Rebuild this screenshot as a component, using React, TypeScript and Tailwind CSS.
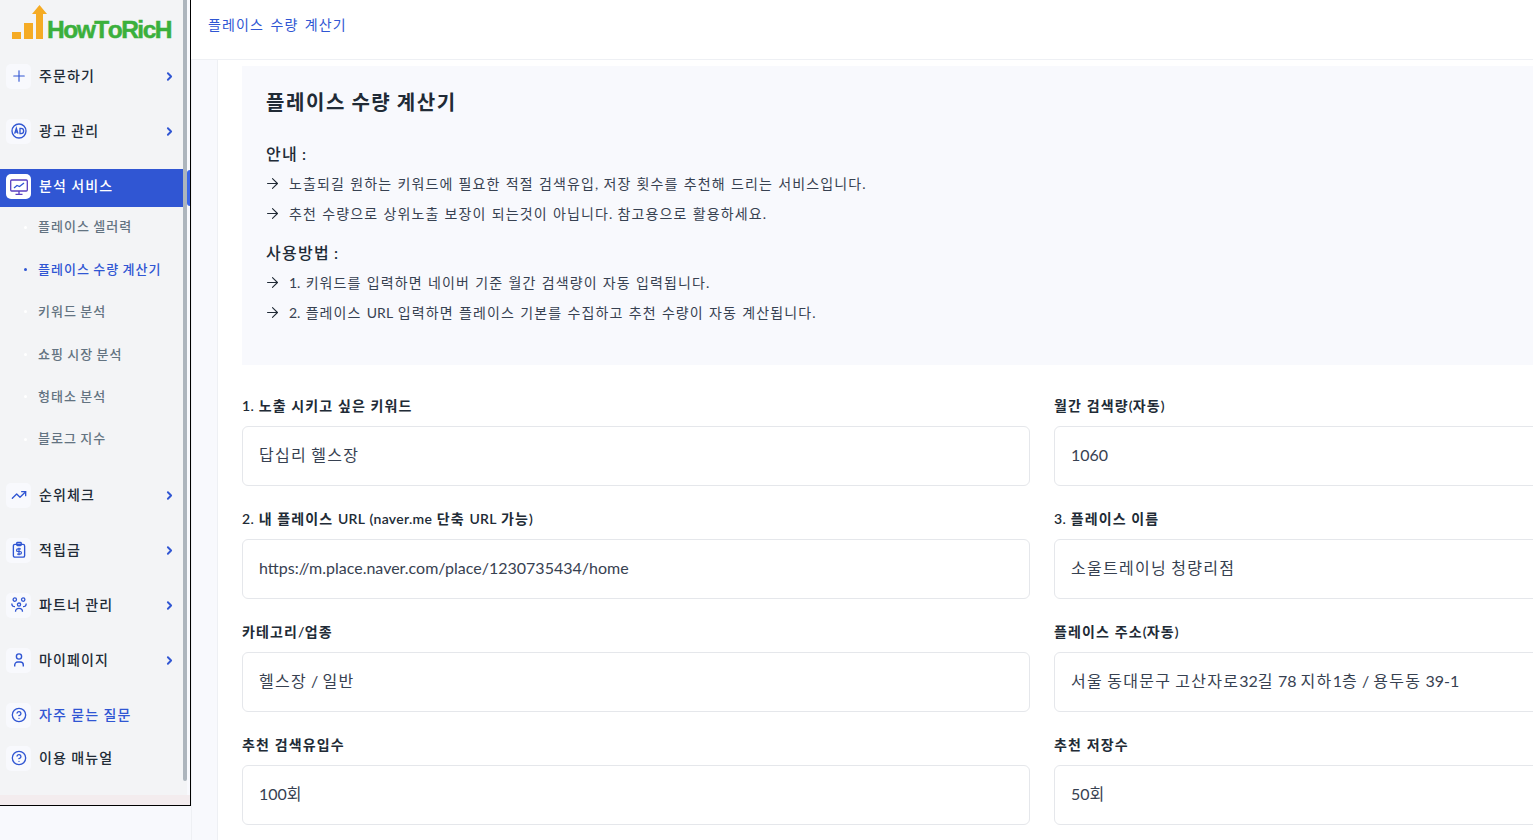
import type { ReactNode } from "react";
import { ArrowRight, ChevronRight, Plus, TrendingUp, CircleHelp } from "lucide-react";

// hangul in the reference sits on a full-em advance, so only those runs get spaced out
function Ko({ t }: { t: string }) {
  return (
    <>
      {t.split(/([가-힣]+)/).map((part, i) =>
        i % 2 === 1 ? (
          <span key={i} className="tracking-[0.08em]">
            {part}
          </span>
        ) : (
          part
        ),
      )}
    </>
  );
}

function AdIcon() {
  return (
    <svg viewBox="0 0 24 24" className="h-4 w-4" fill="none" stroke="currentColor" strokeWidth="2">
      <circle cx="12" cy="12" r="10.500" />
      <path d="M5.500 16 8 8l2.500 8M6.300 13.500h3.400M13.500 8v8h1.500a4 4 0 0 0 0-8z" strokeWidth="2" />
    </svg>
  );
}

function MonitorIcon() {
  return (
    <svg viewBox="0 0 18 18" className="h-[18px] w-[18px]" fill="none" stroke="#3056d3" strokeWidth="1.300">
      <rect x="0.700" y="2" width="16.600" height="11" rx="1" stroke="#5a3fc0" />
      <path d="m4 10 3-2.500 2.500 1L14 5" />
      <path d="M9 13v3M5.500 16.300h7" stroke="#5a3fc0" />
    </svg>
  );
}

function ClipIcon() {
  return (
    <svg viewBox="0 0 24 24" className="h-[18px] w-[18px]" fill="none" stroke="currentColor" strokeWidth="1.800">
      <rect x="4.500" y="4.500" width="15" height="17" rx="2" />
      <rect x="9" y="2" width="6" height="4" rx="1" />
      <path d="M14.500 10.500h-4a1.300 1.300 0 0 0 0 3.500h3a1.300 1.300 0 0 1 0 3.500h-4M12 9v10" strokeWidth="1.600" />
    </svg>
  );
}

function TeamIcon() {
  return (
    <svg viewBox="0 0 16 16" className="h-4 w-4" fill="none" stroke="currentColor" strokeWidth="1.300">
      <circle cx="3.800" cy="2.600" r="1.700" />
      <circle cx="12.200" cy="2.600" r="1.700" />
      <circle cx="8" cy="7.600" r="1.600" />
      <path d="M0.800 6.500c0 2 1.300 3.200 3.200 3.200M15.200 6.500c0 2-1.300 3.200-3.200 3.200M4.500 14.800c0-2.200 1.400-3.500 3.500-3.500s3.500 1.300 3.500 3.500" />
    </svg>
  );
}

function PersonIcon() {
  return (
    <svg viewBox="0 0 16 16" className="h-4 w-4" fill="none" stroke="currentColor" strokeWidth="1.400">
      <circle cx="8" cy="4.500" r="2.600" />
      <path d="M3.700 14.500v-1.500a3 3 0 0 1 3-3h2.600a3 3 0 0 1 3 3v1.500" />
    </svg>
  );
}

function Logo() {
  return (
    <div className="flex h-[39px] items-end pl-3">
      <svg viewBox="0 0 35 34" className="h-[34px] w-[35px] shrink-0" fill="#f5ab24">
        <rect x="0" y="27" width="9" height="7" />
        <rect x="12" y="18" width="9" height="16" />
        <path d="M24 34V9h-4l7.500-9L35 9h-4v25z" />
      </svg>
      <span className="font-['Liberation_Sans',sans-serif] text-[24.500px] leading-[18px] font-bold tracking-[-1.500px] text-[#3bb03c] [font-kerning:none] [-webkit-text-stroke:0.5px_#3bb03c]">
        HowToRicH
      </span>
    </div>
  );
}

function NavItem({ icon, label, chevron = true, active = false, blue = false, className = "" }: { icon: ReactNode; label: string; chevron?: boolean; active?: boolean; blue?: boolean; className?: string }) {
  return (
    <div className={`flex h-[38px] items-center pl-[6px] pr-[7px] ${active ? "bg-[#3056d3] pb-[3px]" : ""} ${className}`}>
      <span className={`flex h-[25px] w-[25px] items-center justify-center rounded-[5px] ${active ? "bg-white" : "bg-[#f8f9fd]"} text-[#3056d3]`}>{icon}</span>
      <span className={`ml-[8px] flex-1 pb-[2px] text-[14px] font-medium [word-spacing:0.05em] ${active ? "text-white" : blue ? "text-[#3056d3]" : "text-[#212b36]"}`}>
        <Ko t={label} />
      </span>
      {chevron && !active && <ChevronRight className="mt-px h-[13px] w-[13px] text-[#3056d3]" strokeWidth={3.500} />}
    </div>
  );
}

const subItems = ["플레이스 셀러력", "플레이스 수량 계산기", "키워드 분석", "쇼핑 시장 분석", "형태소 분석", "블로그 지수"];

function Sidebar() {
  return (
    <aside className="relative h-[806px] w-[191px] shrink-0 overflow-hidden border-r border-b border-black bg-[#f3f4f6]">
      <div className="absolute top-0 right-0 h-full w-[3px] bg-[#f8f9fd]" />
      <div className="absolute top-[170px] right-0 h-[36px] w-[3px] rounded-l-[3px] bg-[#3b66e8]" />
      <div className="absolute top-0 right-[3px] h-[781px] w-[4px] rounded-b-[2px] bg-[#adb5bd]" />
      <div className="w-[183px]">
        <div className="h-[57px]">
          <Logo />
        </div>
        <NavItem icon={<Plus className="h-[18px] w-[18px]" strokeWidth={1.500} />} label="주문하기" />
        <NavItem icon={<AdIcon />} label="광고 관리" className="mt-[17px]" />
        <NavItem icon={<MonitorIcon />} label="분석 서비스" active className="mt-[19px]" />
        <ul>
          {subItems.map((s, i) => (
            <li key={s} className={`flex h-[42.4px] items-center pb-[2px] pl-[24px] text-[13px] font-medium ${i === 1 ? "text-[#3056d3]" : "text-[#637381]"}`}>
              <span className={`h-[3px] w-[3px] rounded-full ${i === 1 ? "bg-[#3056d3]" : "bg-white"}`} />
              <span className="ml-[11px]">
                <Ko t={s} />
              </span>
            </li>
          ))}
        </ul>
        <NavItem icon={<TrendingUp className="h-4 w-4" />} label="순위체크" className="mt-[15px]" />
        <NavItem icon={<ClipIcon />} label="적립금" className="mt-[17px]" />
        <NavItem icon={<TeamIcon />} label="파트너 관리" className="mt-[17px]" />
        <NavItem icon={<PersonIcon />} label="마이페이지" className="mt-[17px]" />
        <NavItem icon={<CircleHelp className="h-4 w-4" />} label="자주 묻는 질문" chevron={false} blue className="mt-[17px]" />
        <NavItem icon={<CircleHelp className="h-4 w-4" />} label="이용 매뉴얼" chevron={false} className="mt-[5px]" />
      </div>
      <div className="absolute right-0 bottom-0 left-0 h-[10px] bg-[#f3ecee]" />
    </aside>
  );
}

function Arrow({ children }: { children: string }) {
  return (
    <li className="flex h-[30px] items-center text-[14px] text-[#374151]">
      <ArrowRight className="mr-[8px] ml-[-2px] h-[17px] w-[17px] text-[#212b36]" strokeWidth={1.500} />
      <span className="[word-spacing:0.115em]">
        <Ko t={children} />
      </span>
    </li>
  );
}

function Field({ label, value }: { label: string; value: string }) {
  return (
    <div>
      <label className="block text-[14px] leading-[20px] font-semibold tracking-[0.3px] text-[#212b36] [word-spacing:0.06em]">
        <Ko t={label} />
      </label>
      <div className="mt-[10px] flex h-[60px] items-center rounded-[6px] border border-[#e5e7eb] bg-white pb-[2px] pl-[16px] text-[16px] text-[#374151]">
        <span>
          <Ko t={value} />
        </span>
      </div>
    </div>
  );
}

export default function App() {
  return (
    <div className="flex h-[840px] w-[1533px] overflow-hidden bg-[#f8f9fd] font-['Lato','Noto_Sans_CJK_KR',sans-serif]">
      <Sidebar />
      <main className="min-w-0 flex-1">
        <header className="h-[60px] border-b border-[#eef0f4] bg-white pt-[14px] pl-[17px] text-[14px] text-[#3056d3] [word-spacing:0.2em]">
          <Ko t="플레이스 수량 계산기" />
        </header>
        <div className="flex h-[780px]">
          <div className="w-[27px] shrink-0 border-x border-[#eef0f4]" />
          <div className="min-w-0 flex-1 overflow-hidden bg-white pt-[6px] pl-[24px]">
            <section className="h-[299px] w-[1400px] bg-[#f8f9fd] pt-[23px] pl-[24px]">
              <h1 className="text-[20px] leading-[26px] font-bold text-[#212b36] [word-spacing:0.5px]">
                <Ko t="플레이스 수량 계산기" />
              </h1>
              <h2 className="mt-[27px] text-[16px] leading-[24px] font-medium text-[#212b36]">
                <Ko t="안내 :" />
              </h2>
              <ul className="mt-[2px]">
                <Arrow>노출되길 원하는 키워드에 필요한 적절 검색유입, 저장 횟수를 추천해 드리는 서비스입니다.</Arrow>
                <Arrow>추천 수량으로 상위노출 보장이 되는것이 아닙니다. 참고용으로 활용하세요.</Arrow>
              </ul>
              <h2 className="mt-[13px] text-[16px] leading-[24px] font-medium text-[#212b36]">
                <Ko t="사용방법 :" />
              </h2>
              <ul className="mt-[2px]">
                <Arrow>1. 키워드를 입력하면 네이버 기준 월간 검색량이 자동 입력됩니다.</Arrow>
                <Arrow>2. 플레이스 URL 입력하면 플레이스 기본를 수집하고 추천 수량이 자동 계산됩니다.</Arrow>
              </ul>
            </section>
            <div className="mt-[31px] grid w-[1400px] grid-cols-[788px_1fr] gap-x-[24px] gap-y-[23px]">
              <Field label="1. 노출 시키고 싶은 키워드" value="답십리 헬스장" />
              <Field label="월간 검색량(자동)" value="1060" />
              <Field label="2. 내 플레이스 URL (naver.me 단축 URL 가능)" value="https://m.place.naver.com/place/1230735434/home" />
              <Field label="3. 플레이스 이름" value="소울트레이닝 청량리점" />
              <Field label="카테고리/업종" value="헬스장 / 일반" />
              <Field label="플레이스 주소(자동)" value="서울 동대문구 고산자로32길 78 지하1층 / 용두동 39-1" />
              <Field label="추천 검색유입수" value="100회" />
              <Field label="추천 저장수" value="50회" />
            </div>
          </div>
        </div>
      </main>
    </div>
  );
}
